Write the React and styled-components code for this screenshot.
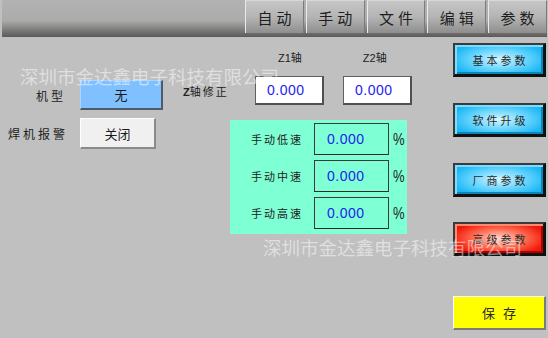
import React from "react";
import styled, { createGlobalStyle, css } from "styled-components";

const Global = createGlobalStyle`
  html, body { margin: 0; padding: 0; }
  body {
    width: 548px; height: 338px; overflow: hidden;
    background: #c0c0c0;
    font-family: "Noto Sans CJK SC", "Noto Sans", sans-serif;
  }
`;

const Screen = styled.div`
  position: relative;
  width: 548px;
  height: 338px;
  background: #c0c0c0;
  overflow: hidden;
`;

const Header = styled.div`
  display: flex;
  height: 37px;
  width: 545px;
  margin-left: 2px;
  background: linear-gradient(#b1b2b1 0%, #acacab 55%, #5b5a59 100%);
  border-radius: 2px 2px 0 0;
`;

const HeaderFill = styled.div`
  flex: 1;
`;

const Tabs = styled.div`
  display: flex;
  gap: 2px;
  width: 302px;
  height: 33px;
`;

const Tab = styled.div`
  flex: 1;
  display: flex;
  align-items: center;
  justify-content: center;
  background: linear-gradient(#c6c6c6 0%, #b4b4b4 50%, #8e8e8e 100%);
  border-left: 1px solid #eaeaea;
  border-top: 1px solid #d8d8d8;
  border-right: 1px solid #7a7a7a;
  box-sizing: border-box;
  font-size: 15px;
  letter-spacing: 4px;
  padding-left: 4px;
  color: #1e1e1e;
`;

const Body = styled.div`
  display: flex;
`;

const LeftArea = styled.div`
  display: flex;
  width: 453px;
`;

const ColA = styled.div`
  display: flex;
  flex-direction: column;
  width: 183px;
  padding-top: 43px;
  gap: 8px;
`;

const FieldRow = styled.div`
  display: flex;
  align-items: center;
`;

const Label = styled.div`
  width: ${(p) => p.$w || 80}px;
  box-sizing: border-box;
  padding-left: ${(p) => p.$pl || 0}px;
  font-size: 12px;
  letter-spacing: 3px;
  color: #222;
  white-space: nowrap;
`;

const PlainButton = styled.div`
  display: flex;
  align-items: center;
  justify-content: center;
  box-sizing: border-box;
  width: ${(p) => p.$w}px;
  height: ${(p) => p.$h}px;
  font-size: 13px;
  color: #1a1a1a;
  ${(p) =>
    p.$variant === "blue"
      ? css`
          background: #80c0ff;
          border-top: 1px solid #a8d4ff;
          border-left: 1px solid #a8d4ff;
          border-right: 2px solid #505a66;
          border-bottom: 2px solid #505a66;
        `
      : css`
          background: #f0f0f0;
          border-top: 1px solid #ffffff;
          border-left: 1px solid #ffffff;
          border-right: 2px solid #8a8a8a;
          border-bottom: 2px solid #8a8a8a;
        `}
`;

const ColB = styled.div`
  display: flex;
  flex-direction: column;
  padding-top: 15px;
`;

const AxisHeads = styled.div`
  display: flex;
  height: 12px;
  font-family: "Liberation Sans", "Noto Sans CJK SC", sans-serif;
  font-size: 11px;
  line-height: 12px;
  color: #222;
`;

const AxisHead = styled.div`
  margin-left: ${(p) => p.$ml}px;
`;

const AxisRow = styled.div`
  display: flex;
  align-items: center;
  margin-top: 12px;
`;

const AxisLabel = styled.div`
  width: 72px;
  font-size: 11px;
  letter-spacing: 2px;
  color: #222;
  white-space: nowrap;
  span {
    font-family: "Liberation Sans", sans-serif;
    font-weight: bold;
    letter-spacing: 0;
  }
`;

const ValueBox = styled.div`
  display: flex;
  align-items: center;
  box-sizing: border-box;
  width: ${(p) => p.$w}px;
  height: ${(p) => p.$h}px;
  padding-left: ${(p) => p.$pl}px;
  margin-left: ${(p) => p.$ml || 0}px;
  font-family: "Liberation Sans", "Noto Sans", sans-serif;
  font-size: 14px;
  letter-spacing: 0.5px;
  color: #2222ee;
  ${(p) =>
    p.$green
      ? css`
          background: #7fffd4;
          border: 1px solid #3a3a3a;
          border-bottom-color: #2a2a2a;
        `
      : css`
          background: #ffffff;
          border: 1px solid #606060;
          border-right: 2px solid #505050;
          border-bottom: 2px solid #505050;
        `}
`;

const SpeedPanel = styled.div`
  display: flex;
  flex-direction: column;
  gap: 5px;
  width: 177px;
  height: 114px;
  box-sizing: border-box;
  margin-top: 15px;
  margin-left: 47px;
  padding-top: 3px;
  background: #7fffd4;
`;

const SpeedRow = styled.div`
  display: flex;
  align-items: center;
  height: 32px;
`;

const SpeedLabel = styled.div`
  width: 84px;
  box-sizing: border-box;
  padding-left: 21px;
  font-size: 11px;
  letter-spacing: 2px;
  color: #222;
  white-space: nowrap;
`;

const Percent = styled.div`
  margin-left: 4px;
  font-family: "Liberation Sans", sans-serif;
  font-size: 13px;
  transform: scaleY(1.25);
  color: #222;
`;

const RightCol = styled.div`
  display: flex;
  flex-direction: column;
  width: 93px;
  padding-top: 6px;
`;

const ActionButton = styled.div`
  display: flex;
  align-items: center;
  justify-content: center;
  box-sizing: border-box;
  height: 34px;
  margin-top: ${(p) => p.$mt || 0}px;
  font-size: 11px;
  letter-spacing: 3px;
  padding-left: 3px;
  color: #2a2a2a;
  ${(p) =>
    p.$kind === "cyan" &&
    css`
      background: radial-gradient(ellipse 55% 60% at 50% 50%, #d6f6ff 0%, #6ad6ff 55%, #1cb8f4 100%);
      border: 2px solid #3a3a3a;
      border-right: 3px solid #111;
      border-bottom: 3px solid #111;
      box-shadow: inset 2px 2px 0 #7cdcff, inset -2px -2px 0 #0a86b8;
    `}
  ${(p) =>
    p.$kind === "red" &&
    css`
      background: radial-gradient(ellipse 55% 60% at 50% 50%, #ffd8cc 0%, #ff6a50 55%, #f01808 100%);
      border: 2px solid #3a3a3a;
      border-right: 3px solid #111;
      border-bottom: 3px solid #111;
      box-shadow: inset 2px 2px 0 #ff8a70, inset -2px -2px 0 #b00000;
    `}
  ${(p) =>
    p.$kind === "yellow" &&
    css`
      background: #ffff00;
      border-top: 1px solid #ffffff;
      border-left: 1px solid #ffffff;
      border-right: 2px solid #7a7a7a;
      border-bottom: 2px solid #7a7a7a;
      font-size: 13px;
      letter-spacing: 8px;
      padding-left: 8px;
    `}
`;

const Watermark = styled.div`
  position: absolute;
  left: ${(p) => p.$x}px;
  top: ${(p) => p.$y}px;
  font-family: "Noto Sans CJK SC", sans-serif;
  font-size: 18.5px;
  line-height: 20px;
  color: rgba(255, 255, 255, 0.5);
  white-space: nowrap;
  pointer-events: none;
`;

const tabs = ["自动", "手动", "文件", "编辑", "参数"];
const speeds = ["手动低速", "手动中速", "手动高速"];
const company = "深圳市金达鑫电子科技有限公司";

export default function App() {
  return (
    <Screen>
      <Global />
      <Header>
        <HeaderFill />
        <Tabs>
          {tabs.map((t) => (
            <Tab key={t}>{t}</Tab>
          ))}
        </Tabs>
      </Header>
      <Body>
        <LeftArea>
          <ColA>
            <FieldRow>
              <Label $pl={36}>机型</Label>
              <PlainButton $variant="blue" $w={83} $h={30}>无</PlainButton>
            </FieldRow>
            <FieldRow>
              <Label $pl={8} $w={80}>焊机报警</Label>
              <PlainButton $w={76} $h={31}>关闭</PlainButton>
            </FieldRow>
          </ColA>
          <ColB>
            <AxisHeads>
              <AxisHead $ml={95}>Z1轴</AxisHead>
              <AxisHead $ml={61}>Z2轴</AxisHead>
            </AxisHeads>
            <AxisRow>
              <AxisLabel>
                <span>Z</span>轴修正
              </AxisLabel>
              <ValueBox $w={69} $h={29} $pl={11}>0.000</ValueBox>
              <ValueBox $w={69} $h={29} $pl={11} $ml={19}>0.000</ValueBox>
            </AxisRow>
            <SpeedPanel>
              {speeds.map((s) => (
                <SpeedRow key={s}>
                  <SpeedLabel>{s}</SpeedLabel>
                  <ValueBox $green $w={75} $h={32} $pl={12}>0.000</ValueBox>
                  <Percent>%</Percent>
                </SpeedRow>
              ))}
            </SpeedPanel>
          </ColB>
        </LeftArea>
        <RightCol>
          <ActionButton $kind="cyan">基本参数</ActionButton>
          <ActionButton $kind="cyan" $mt={26}>软件升级</ActionButton>
          <ActionButton $kind="cyan" $mt={26}>厂商参数</ActionButton>
          <ActionButton $kind="red" $mt={25}>高级参数</ActionButton>
          <ActionButton $kind="yellow" $mt={40}>保存</ActionButton>
        </RightCol>
      </Body>
      <Watermark $x={20} $y={66}>{company}</Watermark>
      <Watermark $x={263} $y={237}>{company}</Watermark>
    </Screen>
  );
}
